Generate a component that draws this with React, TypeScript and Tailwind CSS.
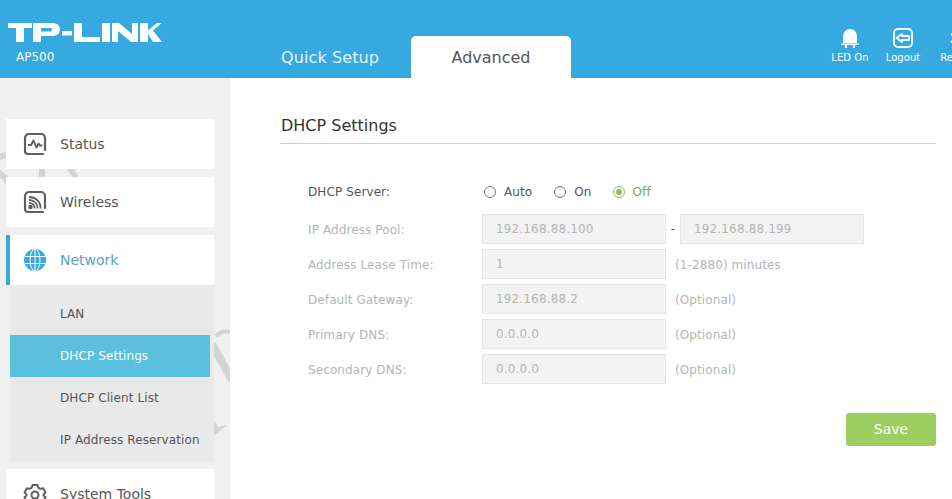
const font = { fontFamily: '"DejaVu Sans", Verdana, sans-serif' };

function BoxIcon({ kind }: { kind: 'status' | 'wireless' }) {
  return (
    <svg width="24" height="24" viewBox="0 0 24 24" fill="none" stroke="#5f5f5f" strokeWidth="2.2">
      <path d="M22 18V6a4 4 0 0 0-4-4H6a4 4 0 0 0-4 4v13a3 3 0 0 0 3 3h15" strokeLinecap="round" />
      {kind === 'status' ? (
        <path d="M5 13h3l2.500-4.500 3 7 2-4 1.500 2h2.500" strokeWidth="1.900" strokeLinejoin="round" />
      ) : (
        <g strokeWidth="1.800">
          <circle cx="7.500" cy="17" r="1.300" fill="#5f5f5f" />
          <path d="M6 13a5 5 0 0 1 5.500 5.500M6 10a8 8 0 0 1 8.500 8.500M6 7a11 11 0 0 1 11.500 11.500" />
        </g>
      )}
    </svg>
  );
}

function GlobeIcon() {
  return (
    <svg width="24" height="24" viewBox="0 0 24 24" fill="#36a9e1">
      <circle cx="12" cy="12" r="11" />
      <g fill="none" stroke="#fff" strokeWidth="1">
        <ellipse cx="12" cy="12" rx="5" ry="11" />
        <path d="M12 1v22M2 8.500h20M2 15.500h20" />
      </g>
    </svg>
  );
}

function GearIcon() {
  return (
    <svg width="24" height="24" viewBox="0 0 24 24" fill="none" stroke="#5f5f5f" strokeWidth="2" strokeLinejoin="round">
      <path d="M9.500 3h5l.7 2.600 2.300 1.300 2.600-.7 2.400 4.300-1.900 1.900v1.200l1.900 1.900-2.400 4.300-2.600-.7-2.300 1.300-.7 2.600h-5l-.7-2.600-2.300-1.300-2.600.7L1.500 15.500l1.900-1.900v-1.200L1.500 10.500l2.400-4.300 2.600.7 2.300-1.300z" />
      <circle cx="12" cy="13" r="3.500" />
    </svg>
  );
}

function Label({ children, dim }: { children: string; dim?: boolean }) {
  return <div className={`w-[174px] shrink-0 pt-[2px] text-[12px] tracking-[0.1px] ${dim ? 'text-[#b5b5b5]' : 'text-[#555]'}`}>{children}</div>;
}

function Field({ value }: { value: string }) {
  return (
    <div className="flex h-[30px] w-[184px] items-center border border-[#e4e4e4] bg-[#f3f3f3] pl-[13px] text-[12px] tracking-[0.15px] text-[#b5b5b5]">
      {value}
    </div>
  );
}

function Radio({ label, checked }: { label: string; checked?: boolean }) {
  return (
    <div className={`flex items-center gap-[8px] text-[12px] tracking-[0.1px] ${checked ? '-ml-[1px] text-[#7ba84f]' : 'text-[#555]'}`}>
      <span className={`flex h-[12px] w-[12px] items-center justify-center rounded-full border ${checked ? 'border-[#8fb86a]' : 'border-[#777]'}`}>
        {checked && <span className="h-[6px] w-[6px] rounded-full bg-[#8cc152]" />}
      </span>
      {label}
    </div>
  );
}

function NavCard({ label, icon, active }: { label: string; icon: React.ReactNode; active?: boolean }) {
  return (
    <div className={`flex h-[50px] items-center gap-[13px] bg-white text-[14px] ${active ? 'border-l-4 border-[#36a9e1] pl-[13px] text-[#5b9fc4]' : 'pl-[17px] text-[#555]'}`}>
      <span className="flex w-[24px] justify-center">{icon}</span>
      {label}
    </div>
  );
}

const rows = [
  { label: 'Address Lease Time:', value: '1', note: '(1-2880) minutes' },
  { label: 'Default Gateway:', value: '192.168.88.2', note: '(Optional)' },
  { label: 'Primary DNS:', value: '0.0.0.0', note: '(Optional)' },
  { label: 'Secondary DNS:', value: '0.0.0.0', note: '(Optional)' },
];

export default function App() {
  return (
    <div className="flex h-[499px] w-[952px] flex-col overflow-hidden bg-white" style={font}>
      {/* Top bar */}
      <header className="flex h-[78px] shrink-0 overflow-hidden bg-[#36a9e1] text-white">
        <div className="w-[230px] shrink-0 pl-[8px] pt-[23px]">
          <svg width="154" height="19" viewBox="0 0 154 19" fill="white" fillRule="evenodd" aria-hidden="true">
            <path d="M0 0h24v5h-8v14H8V5H0z" />
            <path d="M25 0h19c5 0 8 2.500 8 6.500s-3 6.500-8 6.500H33v6h-8zM33 5v3.500h9c1.500 0 2-.5 2-1.750S43.500 5 42 5z" />
            <path d="M54 8h10v4.500H54z" />
            <path d="M66 0h8v14h18v5H66z" />
            <path d="M94 0h8v19h-8z" />
            <path d="M104 0h7l13 11V0h6v19h-7l-13-11v11h-6z" />
            <path d="M132 0h8v7.500L149 0h4.500l-8.500 7.500L154 19h-9l-5-8v8h-8z" />
          </svg>
          <div className="mt-[8px] pl-[8px] text-[12px] leading-[14px]">AP500</div>
        </div>
        <div className="flex items-end">
          <div className="ml-[51px] flex h-[42px] w-[130px] items-center pt-[1px] text-[16px] tracking-[0.1px] text-[#e3f7ff]">Quick Setup</div>
          <div className="flex h-[42px] w-[160px] items-center justify-center rounded-t-[5px] bg-white pt-[1px] text-[16px] text-[#555]">Advanced</div>
        </div>
        <div className="ml-auto flex w-[121px] shrink-0 pt-[28px] text-[10px] leading-[12px] tracking-[0.05px]">
          <div className="flex w-[38px] shrink-0 flex-col items-center gap-[4px]">
            <svg width="20" height="20" viewBox="0 0 20 20" fill="white">
              <path d="M3 15V8a7 7 0 0 1 14 0v7zM1 15.500h18v1.500H15v3h-2v-3H7v3H5v-3H1z" />
            </svg>
            LED On
          </div>
          <div className="ml-[15px] flex w-[38px] shrink-0 flex-col items-center gap-[4px]">
            <svg width="20" height="20" viewBox="0 0 20 20" fill="none" stroke="white" strokeWidth="1.800" strokeLinejoin="round">
              <rect x="1" y="1" width="18" height="18" rx="4" />
              <path d="M3.500 10l5.500-4v2h7v4H9v2z" />
            </svg>
            Logout
          </div>
          <div className="ml-[17px] flex w-[38px] shrink-0 flex-col items-center gap-[4px]">
            <svg width="20" height="20" viewBox="0 0 20 20" stroke="white" strokeWidth="2.200">
              <path d="M10 2v16M3 6l14 8M17 6L3 14" />
            </svg>
            Reboot
          </div>
        </div>
      </header>

      <div className="flex min-h-0 flex-1">
        {/* Sidebar */}
        <aside className="relative w-[230px] shrink-0 overflow-hidden bg-[#f0f0f0]">
          {/* faint watermark behind the menu */}
          <svg className="absolute inset-0" width="230" height="421" viewBox="0 0 230 421" fill="none" stroke="#d4d4d4" strokeWidth="6">
            <path d="M-4 80l14-4M-4 92c8 6 14 14 20 22M42 90v12M66 86c6 6 10 12 12 20" />
            <path d="M216 258c4-4 9-5 14-4" strokeWidth="4" />
            <path d="M212 266l20 36" strokeWidth="8" />
            <path d="M214 342l4 7 9-2-13 11z" fill="#d4d4d4" stroke="none" />
          </svg>
          <div className="relative flex flex-col pl-[6px] pr-[16px] pt-[41px]">
            <NavCard label="Status" icon={<BoxIcon kind="status" />} />
            <div className="mt-[8px]">
              <NavCard label="Wireless" icon={<BoxIcon kind="wireless" />} />
            </div>
            <div className="mt-[8px]">
              <NavCard label="Network" active icon={<GlobeIcon />} />
            </div>
            <div className="ml-[4px] flex flex-col bg-[#e9e9e9] text-[12px] tracking-[0.1px] text-[#555]">
              <div className="flex h-[50px] items-center pl-[50px] pt-[8px]">LAN</div>
              <div className="mr-[4px] flex h-[42px] items-center bg-[#5bc0de] pl-[50px] text-white">DHCP Settings</div>
              <div className="flex h-[42px] items-center pl-[50px]">DHCP Client List</div>
              <div className="flex h-[42px] items-center pl-[50px]">IP Address Reservation</div>
            </div>
            <div className="mt-[8px]">
              <NavCard label="System Tools" icon={<GearIcon />} />
            </div>
          </div>
        </aside>

        {/* Main form */}
        <main className="min-w-0 flex-1 pl-[50px] pr-[16px] pt-[38px]">
          <h1 className="h-[28px] border-b border-[#cfcfcf] pl-[1px] pt-[1px] text-[16px] leading-[18px] text-[#333]">DHCP Settings</h1>
          <div className="pl-[28px] pt-[35px]">
            <div className="flex h-[26px] items-center">
              <div className="w-[174px] shrink-0 text-[12px] tracking-[0.1px] text-[#555]">DHCP Server:</div>
              <div className="ml-[2px] flex gap-[22px]">
                <Radio label="Auto" />
                <Radio label="On" />
                <Radio label="Off" checked />
              </div>
            </div>
            <div className="mt-[9px] flex flex-col gap-[5px]">
              <div className="flex items-center">
                <Label dim>IP Address Pool:</Label>
                <Field value="192.168.88.100" />
                <span className="w-[14px] text-center text-[12px] text-[#555]">-</span>
                <Field value="192.168.88.199" />
              </div>
              {rows.map(r => (
                <div key={r.label} className="flex items-center">
                  <Label dim>{r.label}</Label>
                  <Field value={r.value} />
                  <span className="pl-[9px] pt-[2px] text-[12px] tracking-[0.1px] text-[#b5b5b5]">{r.note}</span>
                </div>
              ))}
            </div>
            <div className="mt-[29px] flex justify-end">
              <button className="h-[33px] w-[90px] rounded-[3px] bg-[#9ccf5f] text-[14px] text-white">Save</button>
            </div>
          </div>
        </main>
      </div>
    </div>
  );
}
